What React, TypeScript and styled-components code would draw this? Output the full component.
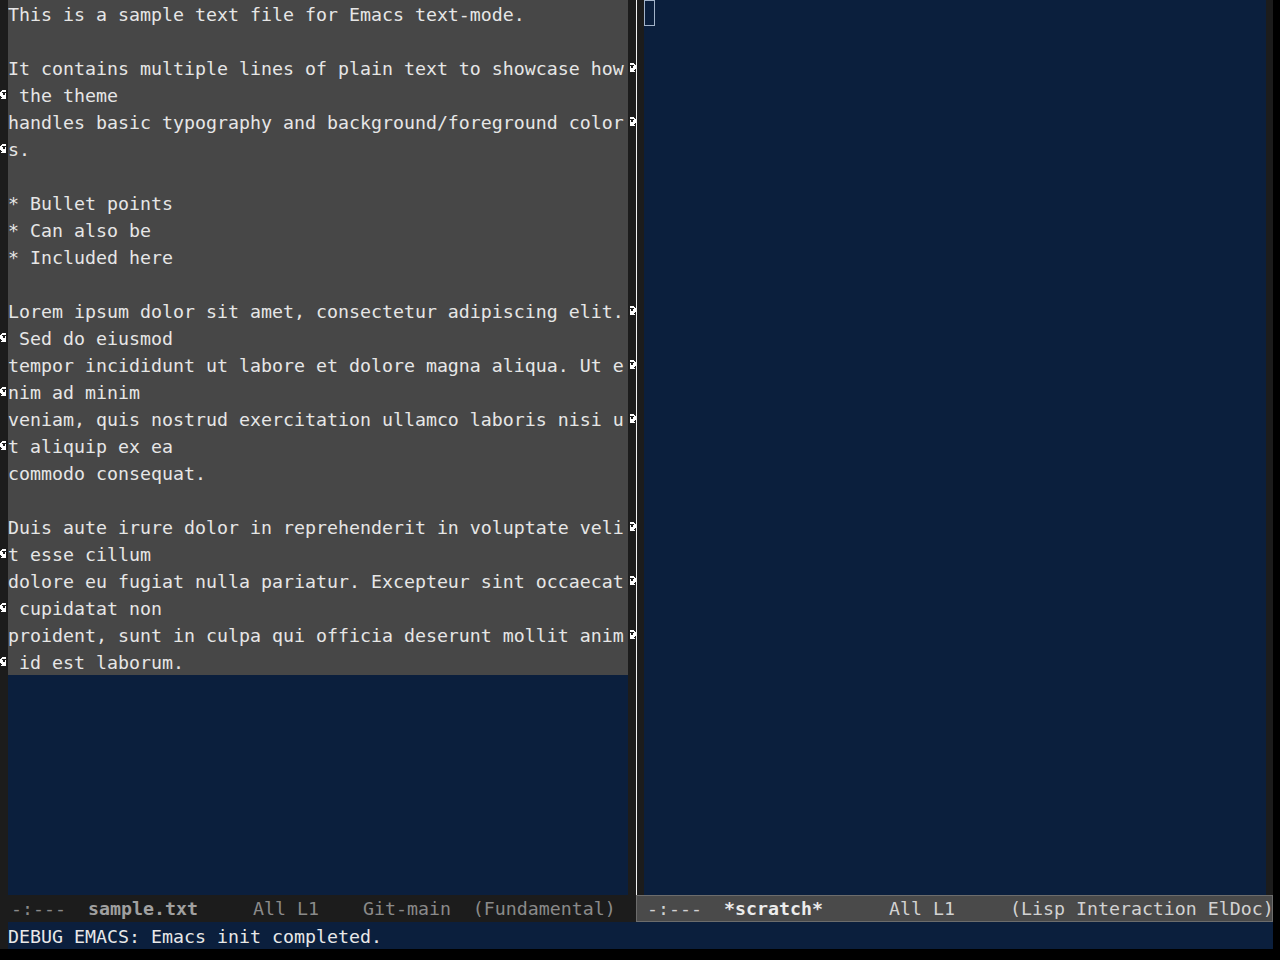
import React from "react";
import styled, { createGlobalStyle } from "styled-components";

type Wrap = "left" | "right" | undefined;

type VisualLine = {
  text: string;
  wrap?: Wrap;
};

const NAVY = "#0b1f3d";
const FRINGE = "#1c1c1c";

const GlobalStyle = createGlobalStyle`
  html, body {
    margin: 0;
    padding: 0;
    background: #000;
  }
`;

const Frame = styled.div`
  width: 1280px;
  height: 960px;
  box-sizing: border-box;
  padding-right: 7px;
  background: #000;
  display: flex;
  flex-direction: column;
  overflow: hidden;
  font-family: "DejaVu Sans Mono", "Liberation Mono", monospace;
  font-size: 18.27px;
`;

const Windows = styled.div`
  display: flex;
  height: 922px;
  flex-shrink: 0;
`;

const Window = styled.div<{ $width: number }>`
  width: ${(p) => p.$width}px;
  display: flex;
  flex-direction: column;
  flex-shrink: 0;
`;

const Body = styled.div`
  flex: 1;
  display: flex;
  min-height: 0;
`;

const FringeColumn = styled.div<{ $width: number }>`
  width: ${(p) => p.$width}px;
  flex-shrink: 0;
  background: ${FRINGE};
  display: flex;
  flex-direction: column;
`;

const FringeCell = styled.div<{ $side: "left" | "right" }>`
  height: 27px;
  display: flex;
  align-items: center;
  justify-content: ${(p) => (p.$side === "left" ? "flex-start" : "flex-end")};
  padding-bottom: 1px;
  box-sizing: border-box;
`;

const Divider = styled.div`
  width: 1px;
  flex-shrink: 0;
  background: #f2f2f2;
`;

const TextArea = styled.div`
  flex: 1;
  min-width: 0;
  background: ${NAVY};
  overflow: hidden;
`;

const Buffer = styled.div`
  background: #474747;
  color: #e6e6e6;
`;

const Line = styled.div`
  height: 27px;
  box-sizing: border-box;
  padding-top: 2px;
  line-height: 25px;
  white-space: pre;
`;

const Cursor = styled.div`
  width: 11px;
  height: 26px;
  box-sizing: border-box;
  border: 1px solid #a3b3c9;
`;

const ModeLine = styled.div<{ $active?: boolean }>`
  height: 27px;
  box-sizing: border-box;
  padding: 1px 0 0 10px;
  line-height: 24px;
  white-space: pre;
  overflow: hidden;
  border: 1px solid ${(p) => (p.$active ? "#6c6c6c" : FRINGE)};
  background: ${(p) => (p.$active ? "#4a4a4a" : FRINGE)};
  color: ${(p) => (p.$active ? "#d2d2d2" : "#8a8a8a")};
`;

const BufferName = styled.b<{ $active?: boolean }>`
  font-weight: bold;
  color: ${(p) => (p.$active ? "#ececec" : "#a0a0a0")};
`;

const Minibuffer = styled.div`
  display: flex;
  height: 27px;
  flex-shrink: 0;
`;

const Echo = styled.div`
  flex: 1;
  background: ${NAVY};
  color: #e8e8e8;
  box-sizing: border-box;
  padding-top: 2px;
  line-height: 25px;
  white-space: pre;
`;

// 8x8 continuation bitmaps, like the ones in Emacs' fringe
const RIGHT_CURLY = [
  "..xxxx..",
  "..xxxxx.",
  "......xx",
  "..x..xxx",
  "..xxxxxx",
  "..xxxxx.",
  "..xxxx..",
  "..xxxxx.",
];
const LEFT_CURLY = RIGHT_CURLY.map((r) => r.split("").reverse().join(""));

const FringeBitmap = ({ rows }: { rows: string[] }) => (
  <svg width="8" height="9" viewBox="0 0 8 8" preserveAspectRatio="none" shapeRendering="crispEdges">
    {rows.map((row, y) =>
      row.split("").map((c, x) =>
        c === "x" ? <rect key={`${x}-${y}`} x={x} y={y} width="1" height="1" fill="#ffffff" /> : null
      )
    )}
  </svg>
);

const Fringe = ({
  side,
  width,
  lines,
}: {
  side: "left" | "right";
  width: number;
  lines: VisualLine[];
}) => (
  <FringeColumn $width={width}>
    {lines.map((l, i) => (
      <FringeCell $side={side} key={i}>
        {l.wrap === side && <FringeBitmap rows={side === "right" ? RIGHT_CURLY : LEFT_CURLY} />}
      </FringeCell>
    ))}
  </FringeColumn>
);

const sampleLines: VisualLine[] = [
  { text: "This is a sample text file for Emacs text-mode." },
  { text: "" },
  { text: "It contains multiple lines of plain text to showcase how", wrap: "right" },
  { text: " the theme", wrap: "left" },
  { text: "handles basic typography and background/foreground color", wrap: "right" },
  { text: "s.", wrap: "left" },
  { text: "" },
  { text: "* Bullet points" },
  { text: "* Can also be" },
  { text: "* Included here" },
  { text: "" },
  { text: "Lorem ipsum dolor sit amet, consectetur adipiscing elit.", wrap: "right" },
  { text: " Sed do eiusmod", wrap: "left" },
  { text: "tempor incididunt ut labore et dolore magna aliqua. Ut e", wrap: "right" },
  { text: "nim ad minim", wrap: "left" },
  { text: "veniam, quis nostrud exercitation ullamco laboris nisi u", wrap: "right" },
  { text: "t aliquip ex ea", wrap: "left" },
  { text: "commodo consequat." },
  { text: "" },
  { text: "Duis aute irure dolor in reprehenderit in voluptate veli", wrap: "right" },
  { text: "t esse cillum", wrap: "left" },
  { text: "dolore eu fugiat nulla pariatur. Excepteur sint occaecat", wrap: "right" },
  { text: " cupidatat non", wrap: "left" },
  { text: "proident, sunt in culpa qui officia deserunt mollit anim", wrap: "right" },
  { text: " id est laborum.", wrap: "left" },
];

const App = () => {
  return (
    <>
      <GlobalStyle />
      <Frame>
        <Windows>
          <Window $width={636}>
            <Body>
              <Fringe side="left" width={8} lines={sampleLines} />
              <TextArea>
                <Buffer>
                  {sampleLines.map((l, i) => (
                    <Line key={i}>{l.text}</Line>
                  ))}
                </Buffer>
              </TextArea>
              <Fringe side="right" width={8} lines={sampleLines} />
            </Body>
            <ModeLine>
              {"-:---  "}
              <BufferName>sample.txt</BufferName>
              {"     All L1    Git-main  (Fundamental)"}
            </ModeLine>
          </Window>
          <Window $width={637}>
            <Body>
              <Divider />
              <Fringe side="left" width={7} lines={[]} />
              <TextArea>
                <Cursor />
              </TextArea>
              <Fringe side="right" width={7} lines={[]} />
            </Body>
            <ModeLine $active>
              {"-:---  "}
              <BufferName $active>*scratch*</BufferName>
              {"      All L1     (Lisp Interaction ElDoc)"}
            </ModeLine>
          </Window>
        </Windows>
        <Minibuffer>
          <FringeColumn $width={8} />
          <Echo>DEBUG EMACS: Emacs init completed.</Echo>
        </Minibuffer>
      </Frame>
    </>
  );
};

export default App;
